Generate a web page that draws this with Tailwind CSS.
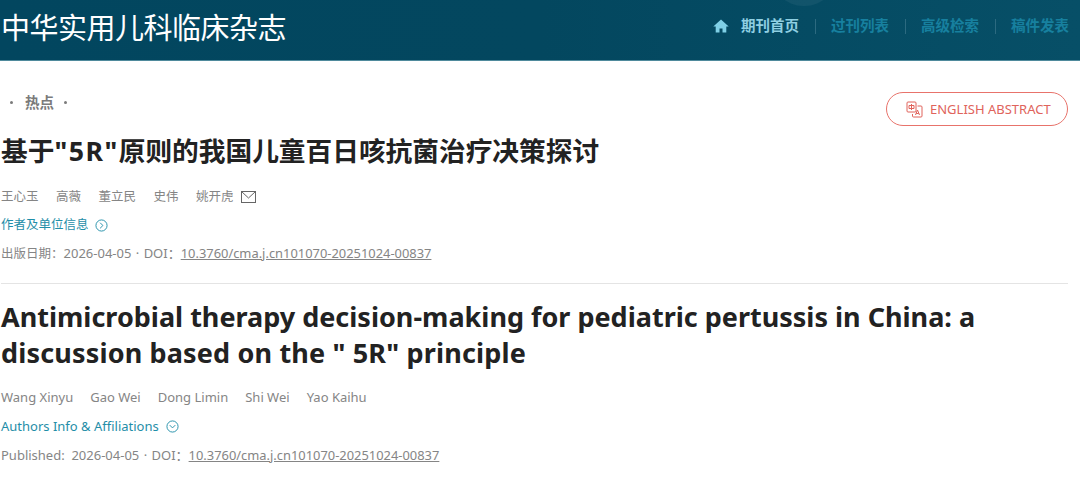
<!DOCTYPE html>
<html lang="zh-CN">
  <head>
    <meta charset="UTF-8" />
    <title>中华实用儿科临床杂志</title>
    <script src="https://cdn.jsdelivr.net/npm/@tailwindcss/browser@4"></script>
  </head>
  <body class="w-[1080px] h-[480px] overflow-hidden bg-white font-['Noto_Sans','Noto_Sans_CJK_SC',sans-serif] text-[#858585]">
    <!-- Header -->
    <header class="relative overflow-hidden h-[61px] flex items-center justify-between pl-[1px] pr-[11px] bg-gradient-to-r from-[#02465f] via-[#03475f] to-[#074f67] border-b border-[#4f8a9c]">
      <div class="absolute left-[770px] -top-[62px] w-[68px] h-[68px] rounded-full bg-white/5"></div>
      <h1 class="relative text-[29px] leading-none text-white tracking-[-0.5px] pb-[6px]">中华实用儿科临床杂志</h1>
      <nav class="relative flex items-center text-[14.5px] font-bold text-[#17809f] pb-[8px]">
        <svg class="w-[16px] h-[16px] mr-[12px]" viewBox="0 0 16 16" fill="#7fd0e6"><path d="M8 1.500 0.300 8.400h2.400V14.500h3.800V10.500h3v4h3.800V8.400h2.400z" /></svg>
        <a class="text-[#8fcfe2]">期刊首页</a>
        <span class="mx-[15.500px] w-px h-[15px] bg-[#2c6a80]"></span>
        <a>过刊列表</a>
        <span class="mx-[15.500px] w-px h-[15px] bg-[#2c6a80]"></span>
        <a>高级检索</a>
        <span class="mx-[15.500px] w-px h-[15px] bg-[#2c6a80]"></span>
        <a>稿件发表</a>
      </nav>
    </header>

    <main class="pl-[1px] pr-[12px]">
      <div class="flex justify-between h-[61px]">
        <div class="flex items-center h-[20px] mt-[31px] pl-[9px] text-[14.5px] font-bold text-[#7b7b7b] leading-none">
          <span class="w-[3px] h-[3px] rounded-full bg-[#7b7b7b]"></span>
          <span class="ml-[12px] mr-[10px]">热点</span>
          <span class="w-[3px] h-[3px] rounded-full bg-[#7b7b7b]"></span>
        </div>
        <a class="flex items-center mt-[31px] w-[182px] h-[34px] pl-[19px] pt-[1px] rounded-full border border-[#e8736b] text-[13px] text-[#e0635b]">
          <svg class="w-[17px] h-[17px] mr-[7px]" viewBox="0 0 17 17" fill="none" stroke="#e0635b" stroke-width="1">
            <rect x="1" y="1" width="9" height="10" rx="1" />
            <path d="M3 4.500h5M3 7.500h5M3 4.500v3M8 4.500v3M5.500 3v6" />
            <path d="M11.500 5H15a1 1 0 0 1 1 1v9a1 1 0 0 1-1 1H7.500a1 1 0 0 1-1-1v-2" />
            <path d="M9.500 14l2-5 2 5M10.200 12.500h2.600" />
          </svg>
          ENGLISH ABSTRACT
        </a>
      </div>

      <h2 class="text-[26.700px] leading-[36px] font-bold text-[#222] mt-[11px]">基于<span class="tracking-[1.500px]">"5R"</span>原则的我国儿童百日咳抗菌治疗决策探讨</h2>

      <div class="flex items-center gap-[17.500px] mt-[18px] text-[12.5px] leading-[20px]">
        <span>王心玉</span><span>高薇</span><span>董立民</span><span>史伟</span>
        <span class="flex items-center gap-[7px]">姚开虎
          <svg class="w-[15px] h-[12px]" viewBox="0 0 15 12" fill="none" stroke="#666" stroke-width="1"><rect x="0.500" y="0.500" width="14" height="11" /><path d="M0.500 0.500 7.500 7l7-6.500" /></svg>
        </span>
      </div>

      <div class="flex items-center gap-[6px] mt-[8px] text-[12.5px] leading-[20px] text-[#1f8ea8]">
        作者及单位信息
        <svg class="w-[13px] h-[13px]" viewBox="0 0 14 14" fill="none" stroke="#1f8ea8"><circle cx="7" cy="7" r="6" /><path d="M5.500 4 8.500 7l-3 3" /></svg>
      </div>

      <p class="mt-[8px] text-[13px] leading-[20px]"><span class="text-[12.5px]">出版日期：</span>2026-04-05 <span class="mx-[1px]">·</span> DOI：<a class="underline text-[12.9px]">10.3760/cma.j.cn101070-20251024-00837</a></p>

      <hr class="mt-[19px] border-[#e4e4e4]" />

      <h2 class="mt-[15px] text-[27px] leading-[36px] font-bold text-[#222]">Antimicrobial therapy decision-making for pediatric pertussis in China: a <span class="tracking-[0.160px]">discussion based on the " 5R" principle</span></h2>

      <div class="flex items-center gap-[17px] mt-[16px] text-[13px] leading-[20px]">
        <span>Wang Xinyu</span><span>Gao Wei</span><span>Dong Limin</span><span>Shi Wei</span><span>Yao Kaihu</span>
      </div>

      <div class="flex items-center gap-[7px] mt-[9px] text-[13px] leading-[20px] text-[#1f8ea8]">
        Authors Info &amp; Affiliations
        <svg class="w-[13px] h-[13px]" viewBox="0 0 14 14" fill="none" stroke="#1f8ea8"><circle cx="7" cy="7" r="6" /><path d="M4 5.500 7 8.500l3-3" /></svg>
      </div>

      <p class="mt-[9px] text-[13px] leading-[20px]">Published:&nbsp; 2026-04-05 <span class="mx-[1px]">·</span> DOI：<a class="underline text-[12.9px]">10.3760/cma.j.cn101070-20251024-00837</a></p>
    </main>
  </body>
</html>
